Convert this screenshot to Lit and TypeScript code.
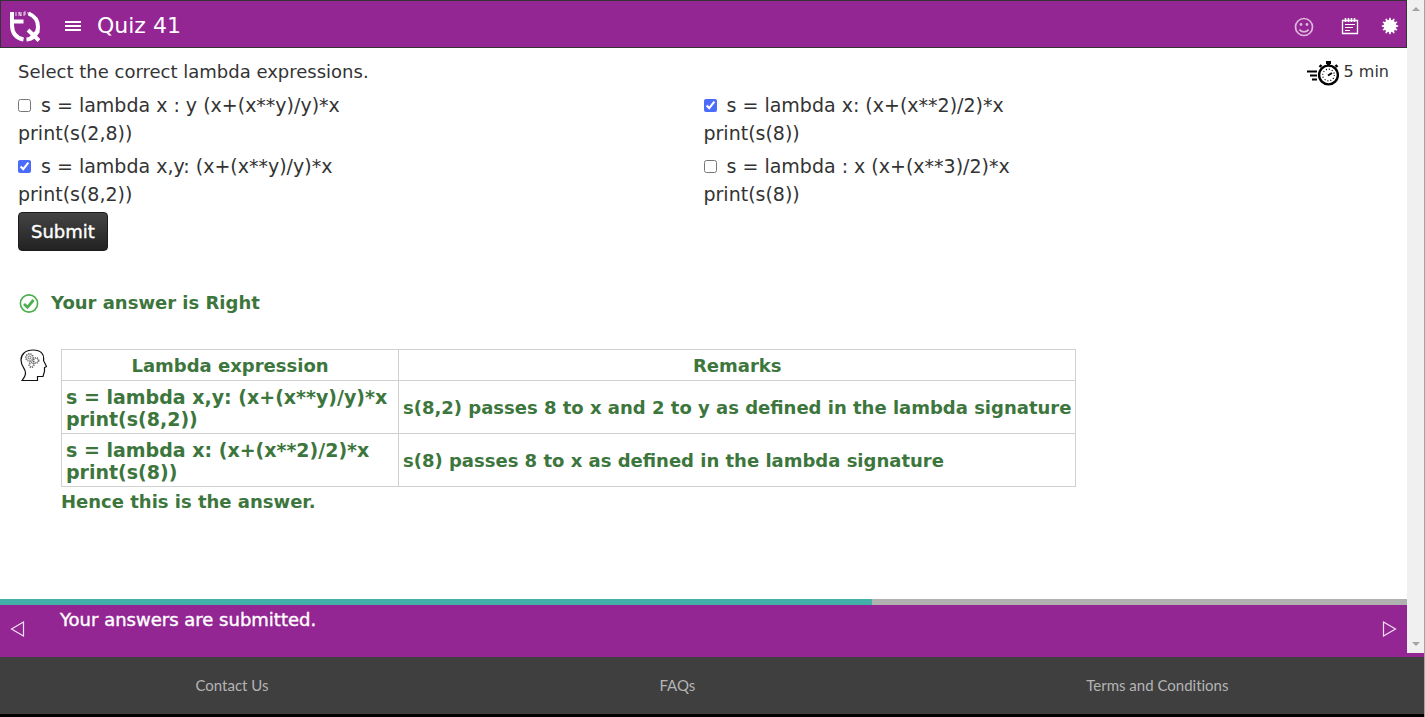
import { LitElement, html, css, svg } from "lit";
import { customElement, state } from "lit/decorators.js";

interface Choice {
  first: string;
  second: string;
  checked: boolean;
}

// Outline of the solid twelve-pointed badge used for the settings button.
const burst = Array.from({ length: 48 }, (_, i) => {
  const r = i % 4 < 2 ? 8.3 : 6.2;
  const a = ((i - 0.5) * Math.PI) / 24 - Math.PI / 2;
  return `${(9 + r * Math.cos(a)).toFixed(2)},${(9 + r * Math.sin(a)).toFixed(2)}`;
}).join(" ");

const cog = (cx: number, cy: number, r: number) => svg`
  <circle cx=${cx} cy=${cy} r=${r} fill="#fff" stroke="#555" stroke-width="1.2" stroke-dasharray="1.2 1.1" />
  <circle cx=${cx} cy=${cy} r=${r - 0.7} fill="#fff" stroke="#555" stroke-width="0.5" />`;

@customElement("app-root")
export class AppRoot extends LitElement {
  @state() private choices: Choice[] = [
    { first: "s = lambda x : y (x+(x**y)/y)*x", second: "print(s(2,8))", checked: false },
    { first: "s = lambda x: (x+(x**2)/2)*x", second: "print(s(8))", checked: true },
    { first: "s = lambda x,y: (x+(x**y)/y)*x", second: "print(s(8,2))", checked: true },
    { first: "s = lambda : x (x+(x**3)/2)*x", second: "print(s(8))", checked: false },
  ];

  static styles = css`
    :host {
      display: flex;
      flex-direction: column;
      min-height: 100vh;
      box-sizing: border-box;
      border-right: 1px solid #a3a3a3;
      font-family: Verdana, "DejaVu Sans", sans-serif;
      font-size: 18px;
      line-height: 28px;
      color: #333;
      background: #fff;
    }
    * {
      box-sizing: border-box;
    }
    svg {
      display: block;
    }
    button {
      font: inherit;
      color: inherit;
      border: 0;
      padding: 0;
      background: none;
      cursor: pointer;
    }
    .frame {
      flex: 1;
      display: flex;
      padding-bottom: 4px;
      background: #942694;
    }
    .page {
      flex: 1;
      display: flex;
      flex-direction: column;
      background: #fff;
    }
    .scroll {
      width: 17px;
      display: flex;
      flex-direction: column;
      justify-content: space-between;
      align-items: center;
      padding: 6px 0;
      background: #f0f0f0;
    }
    header {
      display: flex;
      align-items: center;
      height: 48px;
      padding: 3px 7px 0;
      color: #fff;
      background: #942694;
      border: 1px solid #333;
    }
    .menu {
      margin-left: 25px;
    }
    h1 {
      flex: 1;
      margin: 0 0 0 16px;
      font-size: 22px;
      font-weight: 400;
    }
    .tools {
      display: flex;
      align-items: center;
      gap: 22px;
    }
    .tools button:first-child {
      margin-right: 4px;
    }
    main {
      flex: 1;
      padding: 10px 18px 0;
    }
    .question {
      display: flex;
      justify-content: space-between;
    }
    .question p {
      margin: 0;
    }
    .time {
      display: flex;
      gap: 5px;
      font-size: 16px;
    }
    .choices {
      display: grid;
      grid-template-columns: 1fr 1fr;
      row-gap: 5px;
      margin-top: 5px;
      font-size: 19px;
    }
    .choices label {
      display: block;
    }
    .choices input {
      width: 13px;
      height: 13px;
      margin: 0 10px 0 0;
      accent-color: #4b6bfb;
    }
    .submit {
      margin-top: 4px;
      height: 39px;
      padding: 0 12px;
      color: #fff;
      border: 1px solid #1c1c1c;
      border-radius: 4px;
      background: linear-gradient(#444, #222);
      -webkit-text-stroke: 0.4px #fff;
    }
    .verdict,
    .explain {
      display: flex;
      color: #3c763d;
      font-weight: 700;
    }
    .verdict {
      align-items: center;
      gap: 12px;
      margin-top: 38px;
    }
    .explain {
      gap: 14px;
      margin-top: 32px;
      padding-left: 2px;
    }
    table {
      border-collapse: collapse;
      line-height: 22px;
    }
    th,
    td {
      padding: 5px 4px 3px;
      border: 1px solid #d0d0d0;
      text-align: left;
    }
    th {
      text-align: center;
    }
    th:first-child {
      width: 337px;
    }
    .code {
      font-size: 19px;
    }
    .explain p {
      margin: 1px 0 0;
    }
    .progress {
      height: 6px;
      background: #b0b0b0;
    }
    .bar {
      height: 6px;
      background: #42b0a8;
    }
    .steps {
      display: flex;
      align-items: center;
      height: 48px;
      padding: 0 10px;
      color: #fff;
      background: #942694;
    }
    .steps p {
      flex: 1;
      align-self: flex-start;
      margin: 1px 0 0 35px;
      -webkit-text-stroke: 0.4px #fff;
    }
    footer {
      display: flex;
      justify-content: space-around;
      align-items: center;
      height: 60px;
      padding-bottom: 2px;
      font: 15px/22px Lato, sans-serif;
      font-variant-ligatures: none;
      background: #3f3f3f;
      border-bottom: 3px solid #000;
    }
    footer a {
      color: #b4b4b4;
      text-decoration: none;
    }
  `;

  private toggle(index: number) {
    this.choices = this.choices.map((c, i) => (i === index ? { ...c, checked: !c.checked } : c));
  }

  render() {
    return html`
      <div class="frame">
        <div class="page">
          <header>
            <svg width="32" height="32" viewBox="0 0 32 32" fill="none" stroke="#fff">
              <path d="M4 2v13C4 23 8 28 15.500 29.500" stroke-width="4" />
              <path d="M3 11.500H15.500" stroke-width="4" />
              <path d="M18.500 29.500C26 29 30 23 30 17S27 6 20.500 3.500" stroke-width="4" />
              <path d="M20 20 31 30.500M30.500 20.500 22 29" stroke-width="4" />
              <path d="M8 2v4M11 6V2l2 4V2M16 6V2h2M16 4h2M20 2v2l1 1 1-1V2" stroke-width="0.8" />
            </svg>
            <button class="menu" aria-label="Menu">
              <svg width="16" height="12" viewBox="0 0 16 12" fill="#fff">
                <path d="M0 1h16v2H0zM0 5h16v2H0zM0 9h16v2H0z" />
              </svg>
            </button>
            <h1>Quiz 41</h1>
            <div class="tools">
              <button aria-label="Feedback">
                <svg width="22" height="22" viewBox="0 0 22 22" fill="none" stroke="#ddb6dd" stroke-width="1.700">
                  <circle cx="11" cy="12" r="8.500" />
                  <path d="M6.500 14.500c2 3.300 7 3.300 9 0" />
                  <circle cx="8" cy="9.500" r="1.400" fill="#ddb6dd" stroke="none" />
                  <circle cx="14" cy="9.500" r="1.400" fill="#ddb6dd" stroke="none" />
                </svg>
              </button>
              <button aria-label="Notes">
                <svg width="18" height="18" viewBox="0 0 18 18" fill="none" stroke="#fff">
                  <path d="M1.500 3.500h15v13h-15z" stroke-width="1.300" />
                  <path d="M4.500 1v4M7.500 1v4M10.500 1v4M13.500 1v4" stroke-width="1.600" />
                  <path d="M4 7.500h10M4 10.500h8M4 13.500h5" stroke-width="1.200" />
                </svg>
              </button>
              <button aria-label="Settings">
                <svg width="18" height="18" viewBox="0 0 18 18"><polygon points=${burst} fill="#fff" /></svg>
              </button>
            </div>
          </header>
          <main>
            <div class="question">
              <p>Select the correct lambda expressions.</p>
              <div class="time">
                <svg width="32" height="28" viewBox="0 0 32 28" fill="none" stroke="#000">
                  <circle cx="21.500" cy="17" r="9.400" stroke-width="2.400" />
                  <circle cx="21.500" cy="17" r="5.800" stroke-width="1.200" stroke-dasharray="1 2" />
                  <path d="M21 17.500l4-2.500" stroke-width="2" />
                  <path d="M19 4.500h5M21.500 5v3" stroke-width="3" />
                  <path d="M12.500 9l2-2M28.500 7l2 2" stroke-width="2.400" />
                  <path d="M0 13.500h10M3 17.500h7M5 21.500h5" stroke-width="2" />
                </svg>
                <span>5 min</span>
              </div>
            </div>
            <div class="choices">
              ${this.choices.map(
                (c, i) => html`<label
                  ><input type="checkbox" .checked=${c.checked} @change=${() => this.toggle(i)} />${c.first}<br />${c.second}</label
                >`
              )}
            </div>
            <button class="submit">Submit</button>
            <div class="verdict">
              <svg width="21" height="21" viewBox="0 0 21 21" fill="none" stroke="#4cae4c">
                <circle cx="11" cy="10.500" r="8.600" stroke-width="1.600" />
                <path d="M6 11l3.500 3.300L15.500 7" stroke-width="2.800" />
              </svg>
              <span>Your answer is Right</span>
            </div>
            <div class="explain">
              <svg width="27" height="33" viewBox="0 0 27 33" fill="none">
                <path
                  d="M2 31.500h15.500v-4h5.500l1.500-5v-4l2-1-3-6C24.500 5 21 1 13 1 5 1 1 5.500 1 11c0 7 4.500 8 4.500 13 0 3-1.500 5-3.500 7.500z"
                  stroke="#111"
                  stroke-width="1.200"
                />
                ${cog(16, 11.5, 2.8)} ${cog(11.5, 15.8, 2.6)} ${cog(9.5, 8.5, 3.8)}
                <circle cx="9.500" cy="8.500" r="1.400" stroke="#555" stroke-width="0.800" />
              </svg>
              <div>
                <table>
                  <thead>
                    <tr><th>Lambda expression</th><th>Remarks</th></tr>
                  </thead>
                  <tbody>
                    <tr>
                      <td class="code">s = lambda x,y: (x+(x**y)/y)*x<br />print(s(8,2))</td>
                      <td>s(8,2) passes 8 to x and 2 to y as defined in the lambda signature</td>
                    </tr>
                    <tr>
                      <td class="code">s = lambda x: (x+(x**2)/2)*x<br />print(s(8))</td>
                      <td>s(8) passes 8 to x as defined in the lambda signature</td>
                    </tr>
                  </tbody>
                </table>
                <p>Hence this is the answer.</p>
              </div>
            </div>
          </main>
          <div class="progress"><div class="bar" style="width: 62%"></div></div>
          <nav class="steps">
            <button aria-label="Previous">
              <svg width="15" height="16" viewBox="0 0 15 16" fill="none" stroke="#f3dff3">
                <path d="M13.500 1v14L1.500 8z" stroke-width="1.200" />
              </svg>
            </button>
            <p>Your answers are submitted.</p>
            <button aria-label="Next">
              <svg width="15" height="16" viewBox="0 0 15 16" fill="none" stroke="#f3dff3">
                <path d="M1.500 1v14L13.500 8z" stroke-width="1.200" />
              </svg>
            </button>
          </nav>
        </div>
        <div class="scroll" aria-hidden="true">
          <svg width="8" height="5" viewBox="0 0 8 5" fill="#a3a3a3"><path d="M0 5 4 1l4 4z" /></svg>
          <svg width="8" height="5" viewBox="0 0 8 5" fill="#a3a3a3"><path d="M0 0 4 4l4-4z" /></svg>
        </div>
      </div>
      <footer>
        <a href="#contact">Contact Us</a>
        <a href="#faqs">FAQs</a>
        <a href="#terms">Terms and Conditions</a>
      </footer>
    `;
  }
}
